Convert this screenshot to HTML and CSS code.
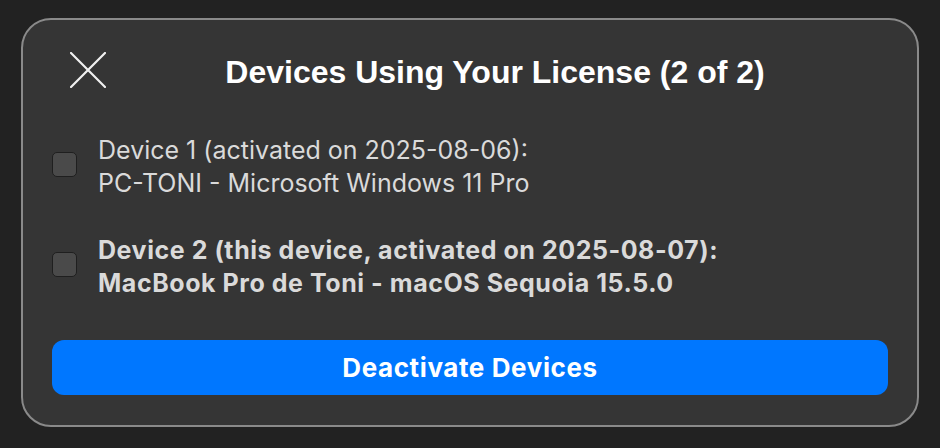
FILE: index.html
```
<!DOCTYPE html>
<html>
<head>
<meta charset="utf-8">
<link rel="stylesheet" href="styles.css">
</head>
<body>
<div class="panel">
  <div class="header">
    <button class="close" aria-label="Close">
      <svg width="36" height="36" viewBox="0 0 36 36"><path d="M1 1 L35 35 M35 1 L1 35" stroke="#f0f0f0" stroke-width="2.2" stroke-linecap="square" fill="none"/></svg>
    </button>
    <h1 class="title">Devices Using Your License (2 of 2)</h1>
  </div>
  <div class="devices">
    <label class="device">
      <span class="check"></span>
      <span class="info">Device 1 (activated on 2025-08-06):<br>PC-TONI - Microsoft Windows 11 Pro</span>
    </label>
    <label class="device current">
      <span class="check"></span>
      <span class="info">Device 2 (this device, activated on 2025-08-07):<br>MacBook Pro de Toni - macOS Sequoia 15.5.0</span>
    </label>
  </div>
  <button class="deactivate">Deactivate Devices</button>
</div>
</body>
</html>
```
FILE: styles.css
```
html, body {
  margin: 0;
  padding: 0;
  background: #222222;
}
body {
  width: 940px;
  height: 448px;
  overflow: hidden;
  font-family: Inter, "Noto Sans", sans-serif;
}
.panel {
  box-sizing: border-box;
  margin: 18px 0 0 21px;
  width: 898px;
  height: 409px;
  background: #353535;
  border: 2px solid #8a8a8a;
  border-radius: 30px;
  padding: 22px 29px 0 29px;
  display: flex;
  flex-direction: column;
}
.header {
  display: flex;
  align-items: center;
  height: 56px;
}
.close {
  width: 72px;
  height: 56px;
  padding: 0;
  border: none;
  background: transparent;
  display: flex;
  align-items: center;
  justify-content: center;
}
.close svg { display: block; }
.title {
  flex: 1;
  margin: 4px 22px 0 0;
  text-align: center;
  font-family: "Liberation Sans", Arial, sans-serif;
  font-weight: 700;
  font-size: 32px;
  color: #ffffff;
}
.devices {
  margin-top: 36px;
  display: flex;
  flex-direction: column;
  gap: 34px;
}
.device {
  display: flex;
  align-items: center;
  gap: 21px;
}
.check {
  box-sizing: border-box;
  width: 25px;
  height: 25px;
  border-radius: 5px;
  background: #4a4a4a;
  border: 1px solid #1f1f1f;
  flex: none;
  margin-top: -5px;
}
.info {
  font-size: 25px;
  line-height: 33px;
  color: #dadada;
}
.current .info {
  font-weight: 700;
  letter-spacing: 0.55px;
}
.deactivate {
  margin-top: 40px;
  height: 55px;
  border: none;
  border-radius: 12px;
  background: #0077ff;
  color: #ffffff;
  font-family: Inter, "Noto Sans", sans-serif;
  font-weight: 700;
  font-size: 26px;
  letter-spacing: 0.6px;
}
```
